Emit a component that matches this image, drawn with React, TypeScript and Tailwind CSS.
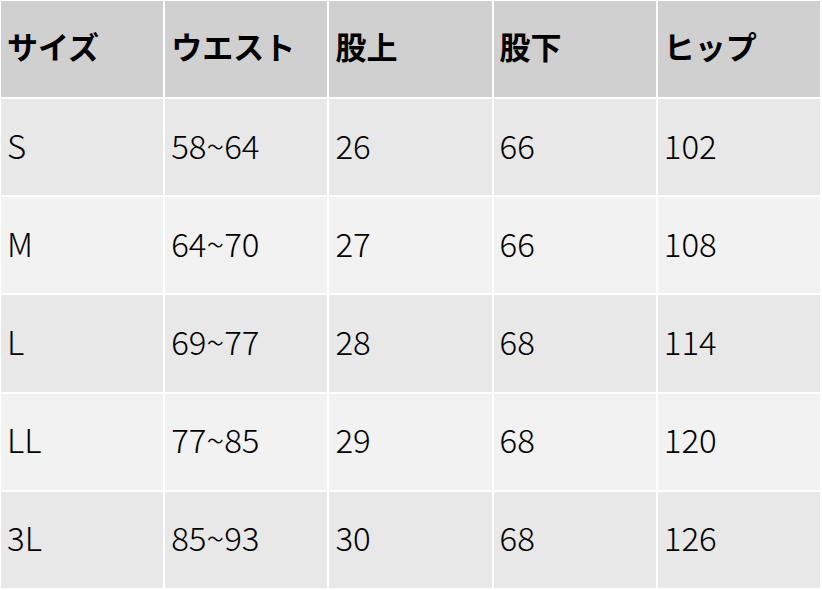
import React from "react";

const header = ["サイズ", "ウエスト", "股上", "股下", "ヒップ"];
const rows = [
  ["S", "58~64", "26", "66", "102"],
  ["M", "64~70", "27", "66", "108"],
  ["L", "69~77", "28", "68", "114"],
  ["LL", "77~85", "29", "68", "120"],
  ["3L", "85~93", "30", "68", "126"],
];

export default function App() {
  return (
    <div
      className="w-[822px] h-[590px] bg-white grid grid-cols-5 grid-rows-6 gap-[2px] pt-[1px] pl-[1px] pr-[2px] pb-[2px] text-black"
      style={{ fontFamily: '"Noto Sans CJK JP", "Noto Sans", sans-serif' }}
    >
      {header.map((h) => (
        <div key={h} className="bg-[#d0d0d0] flex items-center pl-[6px] pb-[8px] text-[31px] font-bold leading-none">
          {h}
        </div>
      ))}
      {rows.map((r, i) =>
        r.map((c, j) => (
          <div
            key={`${i}-${j}`}
            className={`${i % 2 === 0 ? "bg-[#e8e8e8]" : "bg-[#f2f2f2]"} flex items-center pl-[6px] pb-[4px] text-[33px] font-light leading-none`}
          >
            {c}
          </div>
        ))
      )}
    </div>
  );
}
